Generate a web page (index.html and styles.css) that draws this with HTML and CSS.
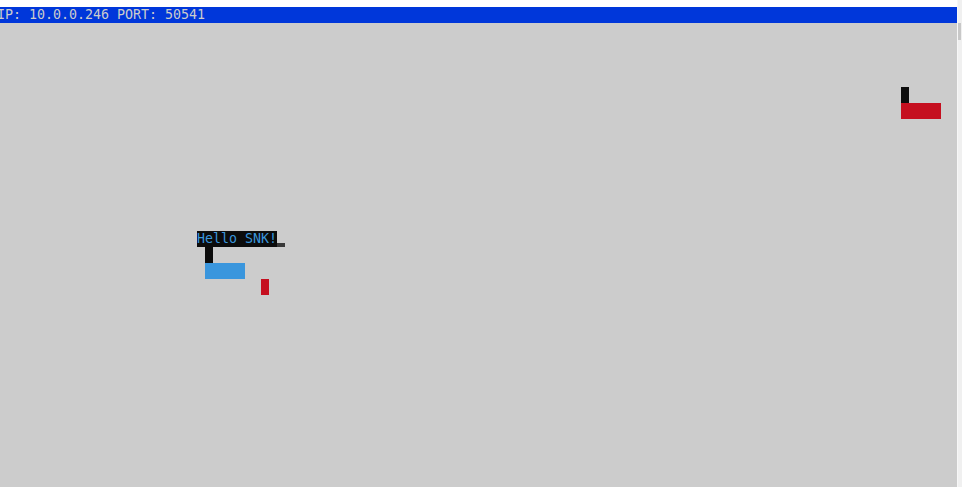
FILE: index.html
```html
<!DOCTYPE html>
<html>
<head>
<meta charset="utf-8">
<link rel="stylesheet" href="styles.css">
</head>
<body>
<div class="page">
  <div class="main">
    <div class="term">
      <div class="status"><span class="status-text">IP: 10.0.0.246 PORT: 50541</span></div>
      <div class="field">
        <div class="cell black" style="left:901px;top:64px;width:8px;height:16px"></div>
        <div class="cell red" style="left:901px;top:80px;width:40px;height:16px"></div>
        <div class="bubble" style="left:197px;top:208px">Hello SNK!</div>
        <div class="cursor" style="left:277px;top:220px"></div>
        <div class="cell black" style="left:205px;top:224px;width:8px;height:16px"></div>
        <div class="cell blue" style="left:205px;top:240px;width:40px;height:16px"></div>
        <div class="cell red" style="left:261px;top:256px;width:8px;height:16px"></div>
      </div>
    </div>
  </div>
  <div class="scrollbar"><div class="thumb"></div></div>
</div>
</body>
</html>
```
FILE: styles.css
```css
html, body {
  margin: 0;
  padding: 0;
  background: #ffffff;
  overflow: hidden;
}
.page {
  display: flex;
  width: 962px;
  height: 487px;
}
.main {
  flex: 1;
  padding-top: 7px;
  display: flex;
  flex-direction: column;
}
.term {
  flex: 1;
  background: #cccccc;
  display: flex;
  flex-direction: column;
  overflow: hidden;
  font-family: "DejaVu Sans Mono", "Liberation Mono", monospace;
  font-size: 13.3px;
  letter-spacing: -0.01px;
}
.status {
  height: 16px;
  background: #0037da;
  color: #cccccc;
  line-height: 16px;
  white-space: pre;
}
.status-text {
  margin-left: -3px;
}
.field {
  flex: 1;
  position: relative;
}
.cell {
  position: absolute;
}
.black { background: #0c0c0c; }
.red { background: #c50f1f; }
.blue { background: #3a96dd; }
.bubble {
  position: absolute;
  background: #0c0c0c;
  color: #3a96dd;
  height: 16px;
  line-height: 16px;
  width: 80px;
  white-space: pre;
  overflow: hidden;
}
.cursor {
  position: absolute;
  width: 8px;
  height: 4px;
  background: #383838;
}
.scrollbar {
  width: 5px;
  background: #f0f0f0;
  border-left: 1px solid #f7f7f7;
  box-sizing: border-box;
  padding-top: 23px;
}
.thumb {
  width: 3px;
  height: 17px;
  background: #c8c8c8;
}
```
